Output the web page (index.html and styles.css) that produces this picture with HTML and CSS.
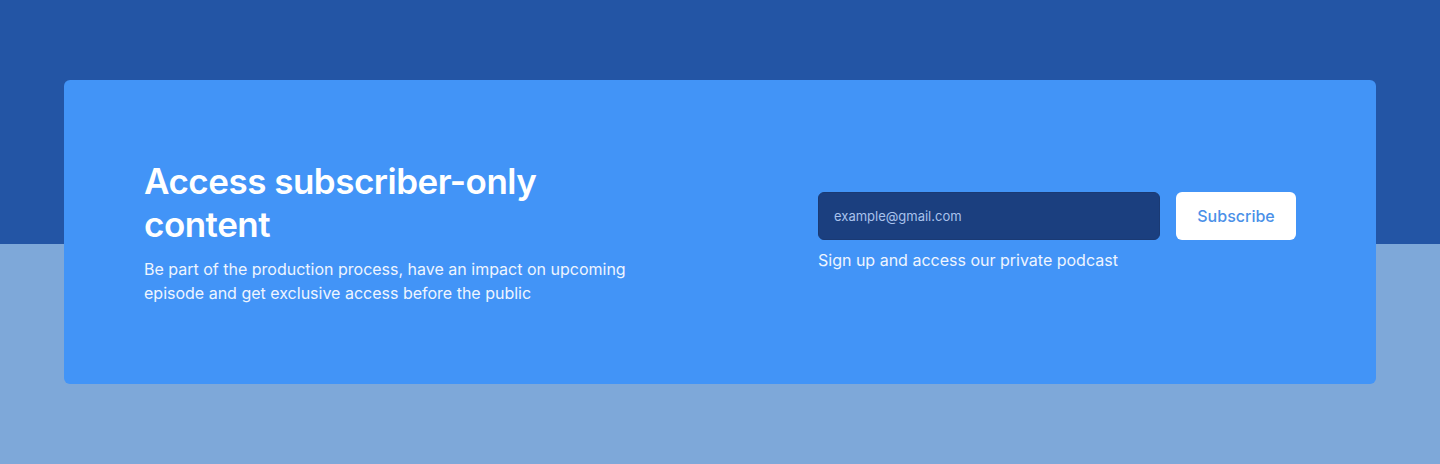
FILE: index.html
```html
<!DOCTYPE html>
<html lang="en">
<head>
<meta charset="utf-8">
<link rel="stylesheet" href="styles.css">
</head>
<body>
<div class="page">
  <div class="band-top"></div>
  <div class="band-bottom"></div>
  <section class="card">
    <div class="intro">
      <h2 class="title">Access subscriber-only content</h2>
      <p class="lead">Be part of the production process, have an impact on upcoming episode and get exclusive access before the public</p>
    </div>
    <div class="signup">
      <form class="form">
        <input class="email" type="email" placeholder="example@gmail.com">
        <button class="btn" type="button">Subscribe</button>
      </form>
      <p class="note">Sign up and access our private podcast</p>
    </div>
  </section>
</div>
</body>
</html>
```
FILE: styles.css
```css
* { box-sizing: border-box; }
html, body { margin: 0; padding: 0; }
body {
  font-family: Inter, "Noto Sans", sans-serif;
  width: 1440px;
  height: 464px;
  overflow: hidden;
}
.page {
  position: relative;
  height: 464px;
  display: flex;
  flex-direction: column;
}
.band-top { height: 244px; background: #2355a5; }
.band-bottom { flex: 1; background: #7ea8d9; }
.card {
  position: absolute;
  left: 64px;
  top: 80px;
  width: 1312px;
  height: 304px;
  background: #4294f7;
  border-radius: 6px;
  padding: 0 80px;
  display: flex;
  align-items: center;
  justify-content: space-between;
  color: #fff;
}
.intro { width: 500px; }
.title {
  margin: 0 0 11px;
  font-size: 35px;
  line-height: 43px;
  font-weight: 600;
  letter-spacing: -0.5px;
}
.lead {
  margin: 0;
  font-size: 16px;
  line-height: 24px;
  color: #eef5ff;
}
.signup { width: 478px; }
.form { display: flex; gap: 16px; margin: 0; }
.email {
  width: 342px;
  height: 48px;
  background: #1b3f7f;
  border: 1px solid #1a3a74;
  border-radius: 6px;
  padding: 0 15px;
  font-family: inherit;
  font-size: 13px;
  color: #fff;
  outline: none;
}
.email::placeholder { color: #a9c2ec; }
.btn {
  width: 120px;
  height: 48px;
  background: #fff;
  border: 0;
  border-radius: 6px;
  font-family: inherit;
  font-size: 16px;
  font-weight: 500;
  color: #4a90e8;
}
.note {
  margin: 8px 0 0;
  font-size: 16px;
  line-height: 24px;
  color: #eef5ff;
}
```
